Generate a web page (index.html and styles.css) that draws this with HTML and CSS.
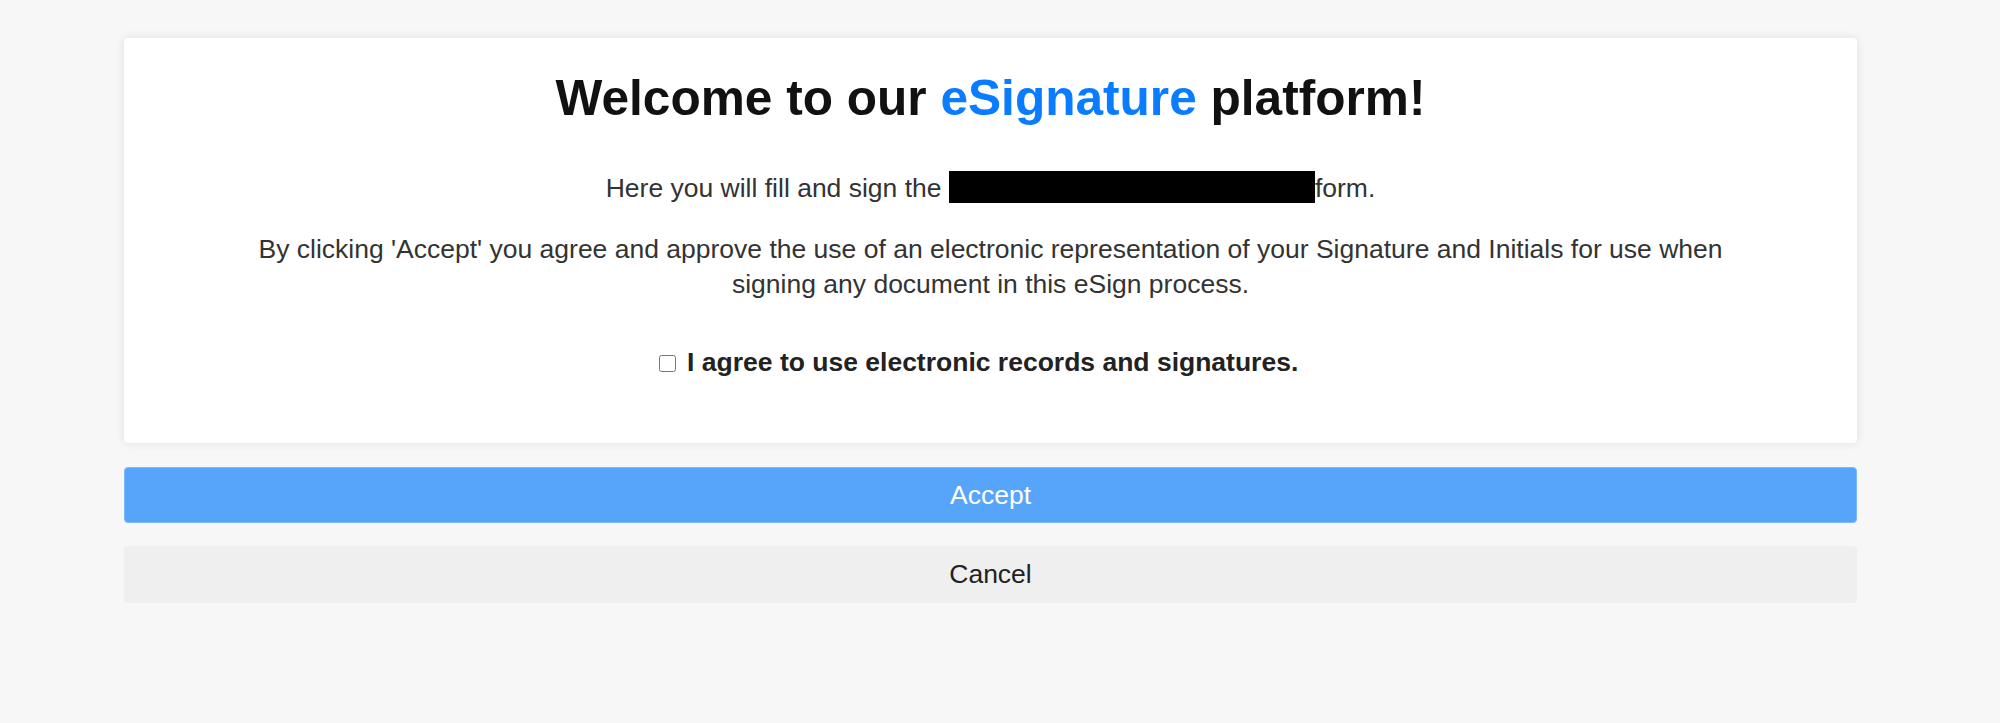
FILE: index.html
```html
<!DOCTYPE html>
<html lang="en">
<head>
  <meta charset="UTF-8">
  <title>eSignature</title>
  <link rel="stylesheet" href="styles.css">
</head>
<body>
  <div class="contenedor">
    <div class="tarjeta">
      <h1>Welcome to our <span class="azul">eSignature</span> platform!</h1>
      <p class="intro">Here you will fill and sign the <span class="tachado"></span>form.</p>
      <p class="texto">By clicking 'Accept' you agree and approve the use of an electronic representation of your Signature and Initials for use when signing any document in this eSign process.</p>
      <div class="acuerdo">
        <input type="checkbox" id="acepto">
        <label for="acepto">I agree to use electronic records and signatures.</label>
      </div>
    </div>
    <button class="boton aceptar">Accept</button>
    <button class="boton cancelar">Cancel</button>
  </div>
</body>
</html>
```

FILE: styles.css
```css
body {
  margin: 0;
  background-color: #f7f7f7;
  font-family: "Liberation Sans", Arial, sans-serif;
  color: #333;
}

.contenedor {
  width: 1733px;
  margin-left: 124px;
  padding-top: 38px;
}

.tarjeta {
  background-color: white;
  border-radius: 4px;
  box-shadow: 0 0 10px rgba(0, 0, 0, 0.1);
  padding: 32px 110px 63px;
  text-align: center;
}

h1 {
  font-size: 49.6px;
  line-height: 56px;
  margin: 0;
  color: #111;
}

.azul {
  color: #0a7cff;
}

.intro, .texto {
  font-size: 26.5px;
  line-height: 35px;
  margin: 0;
}

.intro {
  margin-top: 45px;
}

.texto {
  margin-top: 26px;
}

.tachado {
  display: inline-block;
  width: 366px;
  height: 32px;
  background-color: black;
  vertical-align: -6px;
}

.acuerdo {
  margin-top: 43px;
  padding-right: 24px;
  font-size: 26.5px;
  line-height: 35px;
  font-weight: bold;
  color: #222;
}

.acuerdo input {
  width: 17px;
  height: 17px;
  margin: 0 4px 0 0;
  vertical-align: -1px;
}

.boton {
  display: block;
  width: 100%;
  font-family: "Liberation Sans", Arial, sans-serif;
  font-size: 26.5px;
  border-radius: 4px;
  cursor: pointer;
}

.aceptar {
  margin-top: 24px;
  height: 56px;
  background-color: #57a5fb;
  border: 1px solid #7cb9fc;
  color: white;
}

.cancelar {
  margin-top: 23px;
  height: 57px;
  background-color: #efefef;
  border: none;
  color: #222;
}
```
